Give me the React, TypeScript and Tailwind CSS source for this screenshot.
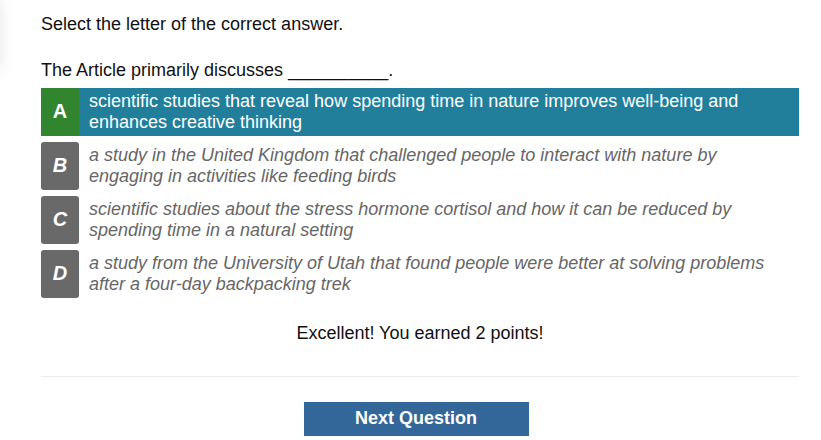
import { useState } from "react";

const choices = [
  { letter: "A", text: "scientific studies that reveal how spending time in nature improves well-being and enhances creative thinking" },
  { letter: "B", text: "a study in the United Kingdom that challenged people to interact with nature by engaging in activities like feeding birds" },
  { letter: "C", text: "scientific studies about the stress hormone cortisol and how it can be reduced by spending time in a natural setting" },
  { letter: "D", text: "a study from the University of Utah that found people were better at solving problems after a four-day backpacking trek" },
];

type ChoiceProps = {
  letter: string;
  text: string;
  selected: boolean;
  onSelect: () => void;
};

function Choice({ letter, text, selected, onSelect }: ChoiceProps) {
  return (
    <button
      type="button"
      aria-pressed={selected}
      onClick={onSelect}
      className={`flex min-h-12 w-full items-stretch text-left ${selected ? "bg-[#217f9b] text-white" : "italic text-[#666666]"}`}
    >
      <span
        className={`flex w-[38px] shrink-0 items-center justify-center pb-[2px] text-xl font-bold text-white ${selected ? "rounded-r-xs bg-[#31852f]" : "rounded-[3px] bg-[#696969]"}`}
      >
        {letter}
      </span>
      <span className="pt-[3px] pr-8 pl-[10px] leading-[21px]">{text}</span>
    </button>
  );
}

export default function App() {
  const [selected, setSelected] = useState("A");
  return (
    <main className="relative overflow-hidden bg-white pt-[13px] pr-[22px] pl-[41px] font-['Liberation_Sans',Arial,sans-serif] text-[18px] leading-[22px] text-[#111111]">
      {/* shadow cast by the panel to the left */}
      <div aria-hidden="true" className="absolute top-0 -left-4 h-[70px] w-4 shadow-[0_0_16px_rgba(0,0,0,0.1)]" />
      <p>Select the letter of the correct answer.</p>
      <p className="mt-6">The Article primarily discusses __________.</p>
      <div className="mt-[7px] flex flex-col gap-[6px]">
        {choices.map((c) => (
          <Choice key={c.letter} letter={c.letter} text={c.text} selected={selected === c.letter} onSelect={() => setSelected(c.letter)} />
        ))}
      </div>
      <p className="mt-6 text-center">Excellent! You earned 2 points!</p>
      <hr className="mt-8 border-[#ebebeb]" />
      <div className="mt-[25px] flex justify-center pr-2">
        <button type="button" className="h-[34px] w-[225px] bg-[#336699] pb-[2px] font-bold text-white">
          Next Question
        </button>
      </div>
    </main>
  );
}
